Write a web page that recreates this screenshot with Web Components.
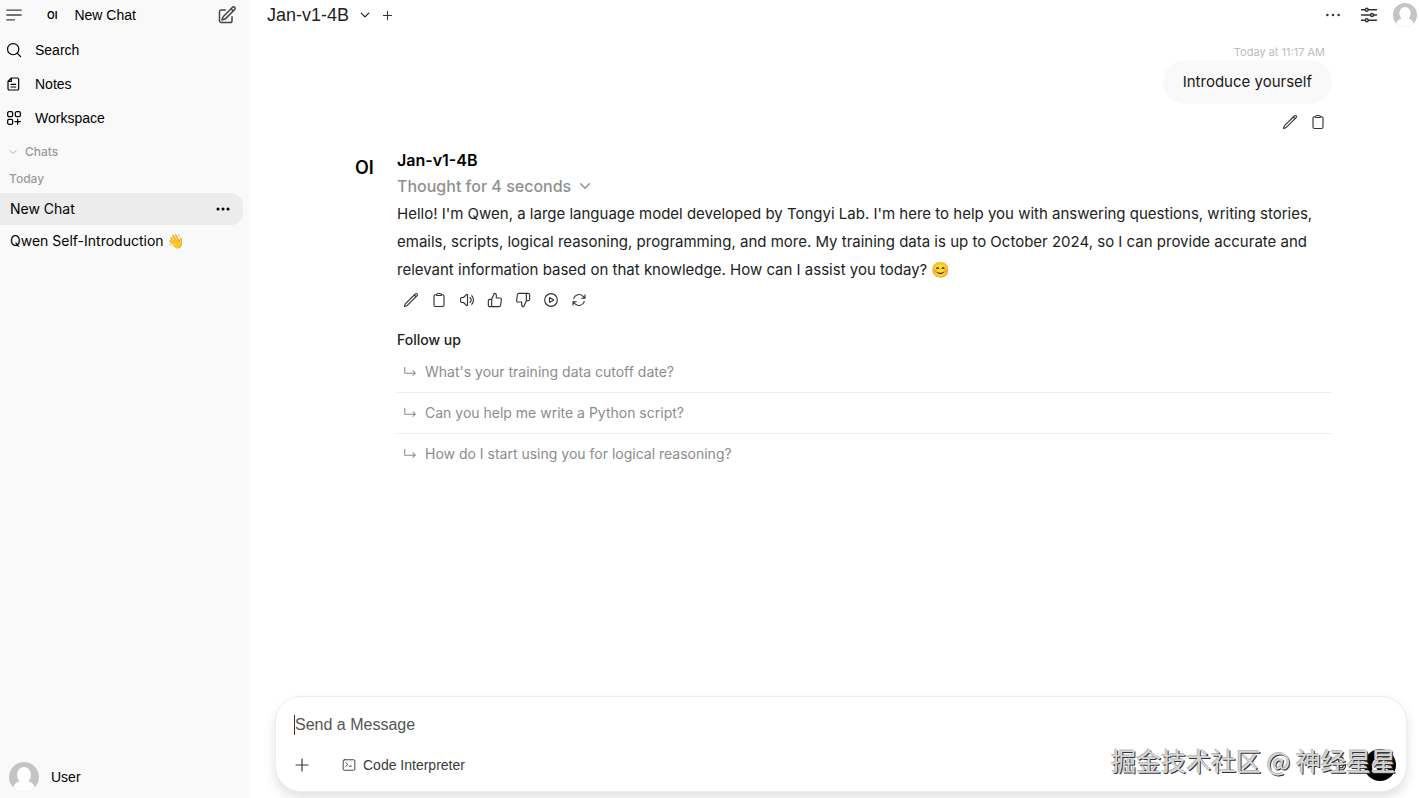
<!DOCTYPE html>
<html lang="en">
<head>
<meta charset="utf-8">
<meta name="viewport" content="width=device-width, initial-scale=1">
<title>New Chat • Open WebUI</title>
<style>
  html, body { margin: 0; height: 100%; }
  body { background: #fff; color: #111; font-family: Inter, "Liberation Sans", sans-serif; font-size: 14px; line-height: 20px; }
</style>
</head>
<body>
<chat-app>
  <side-bar slot="sidebar">
    <nav-item icon="search">Search</nav-item>
    <nav-item icon="note">Notes</nav-item>
    <nav-item icon="squares">Workspace</nav-item>
    <chat-link slot="chats" active>New Chat</chat-link>
    <chat-link slot="chats">Qwen Self-Introduction 👋</chat-link>
  </side-bar>
  <top-bar slot="header">Jan-v1-4B</top-bar>
  <user-message time="Today at 11:17 AM">Introduce yourself</user-message>
  <bot-message name="Jan-v1-4B" thought="Thought for 4 seconds">Hello! I'm Qwen, a large language model developed by Tongyi Lab. I'm here to help you with answering questions, writing stories, emails, scripts, logical reasoning, programming, and more. My training data is up to October 2024, so I can provide accurate and relevant information based on that knowledge. How can I assist you today? 😊
    <follow-up slot="follow">What's your training data cutoff date?</follow-up>
    <follow-up slot="follow">Can you help me write a Python script?</follow-up>
    <follow-up slot="follow">How do I start using you for logical reasoning?</follow-up>
  </bot-message>
  <message-composer slot="composer"></message-composer>
  <water-mark slot="overlay">掘金技术社区 @ 神经星星</water-mark>
</chat-app>

<script>
const ICONS = {
  menu: '<path d="M2.500 5.500h19M2.500 12h19M2.500 18.500h10"/>',
  compose: '<path d="m16.862 4.487 1.687-1.688a1.875 1.875 0 1 1 2.652 2.652L10.582 16.07a4.5 4.5 0 0 1-1.897 1.13L6 18l.8-2.685a4.5 4.5 0 0 1 1.13-1.897l8.932-8.931Zm0 0L19.5 7.125M18 14v4.75A2.25 2.25 0 0 1 15.75 21H5.25A2.25 2.25 0 0 1 3 18.75V8.25A2.25 2.25 0 0 1 5.25 6H10"/>',
  search: '<path d="M22 22l-5.300-5.300m0 0A8.400 8.400 0 1 0 4.800 4.800a8.400 8.400 0 0 0 11.900 11.900z"/>',
  note: '<path d="M8 3h9a2 2 0 0 1 2 2v14a2 2 0 0 1-2 2H5a2 2 0 0 1-2-2V8zM8 3v5H3M7.500 12.500h7M7.500 16.500h7"/>',
  squares: '<path d="M13.5 17.5h8M17.500 13.500v8"/><rect x="2.500" y="2.500" width="7.500" height="7.500" rx="2"/><rect x="2.500" y="14" width="7.500" height="7.500" rx="2"/><rect x="14" y="2.500" width="7.500" height="7.500" rx="2"/>',
  down: '<path d="m19.500 8.250-7.500 7.500-7.500-7.500"/>',
  plus: '<path d="M12 3v18M3 12h18"/>',
  dots: '<path d="M4.500 12h.01M12 12h.01M19.500 12h.01" stroke-width="3.400"/>',
  more: '<path d="M4.500 12h.01M12 12h.01M19.500 12h.01" stroke-width="4.600"/>',
  sliders: '<path d="M2 5h5m4 0h11M2 12h12m4 0h4M2 19h5m4 0h11"/><circle cx="9" cy="5" r="2"/><circle cx="16" cy="12" r="2"/><circle cx="9" cy="19" r="2"/>',
  pencil: '<path d="m16.862 4.487 1.687-1.688a1.875 1.875 0 1 1 2.652 2.652L6.832 19.820a4.500 4.500 0 0 1-1.897 1.130l-2.685.8.8-2.685a4.500 4.500 0 0 1 1.130-1.897L16.863 4.487ZM16.862 4.487 19.500 7.125"/>',
  clipboard: '<path d="M15.666 3.888A2.25 2.25 0 0 0 13.5 2.25h-3c-1.030 0-1.900.693-2.166 1.638m7.332 0c.055.194.084.4.084.612a.75.75 0 0 1-.75.75H9a.75.75 0 0 1-.75-.75c0-.212.03-.418.084-.612m7.332 0c.646.049 1.288.11 1.927.184 1.100.128 1.907 1.077 1.907 2.185V19.500a2.25 2.25 0 0 1-2.25 2.25H6.750A2.25 2.25 0 0 1 4.500 19.500V6.257c0-1.108.806-2.057 1.907-2.185a48.208 48.208 0 0 1 1.927-.184"/>',
  speaker: '<path d="M19.114 5.636a9 9 0 0 1 0 12.728M16.463 8.288a5.25 5.25 0 0 1 0 7.424M6.75 8.25l4.72-4.72a.75.75 0 0 1 1.28.53v15.88a.75.75 0 0 1-1.28.53l-4.72-4.72H4.51c-.88 0-1.704-.507-1.938-1.354A9.01 9.01 0 0 1 2.25 12c0-.83.112-1.633.322-2.396C2.806 8.756 3.63 8.25 4.51 8.25H6.75z"/>',
  up: '<path d="M14 9V5a3 3 0 0 0-3-3l-4 9v11h11.28a2 2 0 0 0 2-1.7l1.38-9a2 2 0 0 0-2-2.3zM7 22H4a2 2 0 0 1-2-2v-7a2 2 0 0 1 2-2h3"/>',
  dislike: '<path d="M10 15v4a3 3 0 0 0 3 3l4-9V2H5.72a2 2 0 0 0-2 1.7l-1.38 9a2 2 0 0 0 2 2.3zm7-13h2.67A2.31 2.31 0 0 1 22 4v7a2.31 2.31 0 0 1-2.33 2H17"/>',
  play: '<circle cx="12" cy="12" r="9.500"/><path d="M15.91 11.672a.375.375 0 0 1 0 .656l-5.603 3.113a.375.375 0 0 1-.557-.328V8.887c0-.286.307-.466.557-.327l5.603 3.112z"/>',
  refresh: '<path d="M16.023 9.348h4.992v-.001M2.985 19.644v-4.992m0 0h4.992m-4.993 0l3.181 3.183a8.25 8.25 0 0 0 13.803-3.7M4.031 9.865a8.25 8.25 0 0 1 13.803-3.7l3.181 3.182m0-4.991v4.99"/>',
  reply: '<path d="M3 4v10h18M17 10l4 4-4 4"/>',
  terminal: '<rect x="2" y="3" width="20" height="18" rx="2"/><path d="m6.500 8 3.500 3-3.500 3M12 14h4"/>',
  mic: '<path d="M12 18.750a6 6 0 0 0 6-6v-1.500m-6 7.500a6 6 0 0 1-6-6v-1.500m6 7.500v3.750m-3.750 0h7.500M12 15.750a3 3 0 0 1-3-3V4.500a3 3 0 1 1 6 0v8.250a3 3 0 0 1-3 3Z"/>',
  headphones: '<path d="M3 14v-2a9 9 0 0 1 18 0v2"/><rect x="3" y="13" width="4" height="8" rx="1" fill="currentColor"/><rect x="17" y="13" width="4" height="8" rx="1" fill="currentColor"/>'
};

const BASE = `
  *, *::before { box-sizing: border-box; }
  button { font: inherit; color: inherit; background: none; border: 0; padding: 0; margin: 0; cursor: pointer; display: flex; align-items: center; justify-content: center; }
  a { color: inherit; text-decoration: none; }
`;
function define(name, css, html) {
  customElements.define(name, class extends HTMLElement {
    constructor() {
      super();
      this.attachShadow({ mode: 'open' });
    }
    connectedCallback() {
      this.shadowRoot.innerHTML = `<style>${BASE}${css}</style>` + (typeof html === 'function' ? html(this) : html);
    }
  });
}

define('ui-icon', `
  :host { display: block; flex: none; width: var(--size, 16px); height: var(--size, 16px); }
  svg { display: block; width: 100%; height: 100%; }
`, el => `<svg viewBox="0 0 24 24" fill="none" stroke="currentColor" stroke-width="${el.getAttribute('weight') || 1.8}" stroke-linecap="round" stroke-linejoin="round" aria-hidden="true">${ICONS[el.getAttribute('name')]}</svg>`);

define('user-avatar', `
  :host { display: block; flex: none; width: var(--size, 24px); height: var(--size, 24px); border-radius: 50%; overflow: hidden; }
  svg { display: block; width: 100%; height: 100%; }
`, `<svg viewBox="0 0 30 30" role="img" aria-label="User avatar"><rect width="30" height="30" fill="#c4c4c4"/><ellipse cx="15" cy="13" rx="7" ry="8" fill="#fff"/><path d="M11 17h8v2c4 1 7 4 8 11H3c1-7 4-10 8-11z" fill="#fff"/></svg>`);

define('nav-item', `
  :host { display: block; }
  a { display: flex; align-items: center; gap: 13px; height: 34px; padding-left: 6px; }
`, el => `<a href="#"><ui-icon name="${el.getAttribute('icon')}"></ui-icon><slot></slot></a>`);

define('chat-link', `
  :host { display: block; font-family: Inter, "Noto Color Emoji", sans-serif; }
  .row { display: flex; align-items: center; height: 32px; padding: 0 12px 0 10px; border-radius: 0 12px 12px 0; }
  :host([active]) .row { background: #ececec; }
  a { flex: 1; white-space: nowrap; }
`, el => `<div class="row"><a href="#"><slot></slot></a>${el.hasAttribute('active') ? '<button aria-label="Chat options"><ui-icon name="more"></ui-icon></button>' : ''}</div>`);

define('side-bar', `
  :host { display: flex; flex-direction: column; background: #f9f9f9; color: #000; font-family: "Liberation Sans", Arial, sans-serif; font-size: 14px; line-height: 20px; }
  header { display: flex; align-items: center; height: 30px; padding: 0 13px 0 5px; color: #444; }
  .home { display: flex; align-items: center; flex: 1; gap: 17px; padding-left: 24px; color: #000; }
  .logo { font: 600 10px/20px Inter, sans-serif; }
  .compose { --size: 20px; }
  .menu { --size: 18px; }
  nav { padding-top: 3px; }
  .label { display: flex; align-items: center; justify-content: flex-start; gap: 7px; font: 500 12px/20px Inter, sans-serif; color: #999; margin: 0; }
  .chats { --size: 10px; padding: 7px 8px 0; }
  .today { padding: 7px 9px 4px; }
  .list { padding-right: 7px; }
  footer { margin-top: auto; display: flex; align-items: center; gap: 12px; height: 42px; padding-left: 9px; --size: 30px; }
`, `
  <header>
    <button class="menu" aria-label="Toggle sidebar"><ui-icon name="menu"></ui-icon></button>
    <a class="home" href="#"><span class="logo">OI</span><span>New Chat</span></a>
    <button class="compose" aria-label="New chat"><ui-icon name="compose"></ui-icon></button>
  </header>
  <nav><slot></slot></nav>
  <button class="label chats"><ui-icon name="down"></ui-icon>Chats</button>
  <h2 class="label today">Today</h2>
  <div class="list"><slot name="chats"></slot></div>
  <footer><user-avatar></user-avatar><span>User</span></footer>
`);

define('top-bar', `
  :host { display: flex; align-items: center; height: 30px; padding: 0 2px 0 17px; color: #333; }
  .model { font: 18px/24px "Liberation Sans", Arial, sans-serif; color: #222; gap: 10px; --size: 12px; }
  .add { --size: 11px; padding-left: 11px; }
  .actions { margin-left: auto; display: flex; align-items: center; gap: 15px; --size: 18px; }
  .more { --size: 18px; padding-right: 3px; }
  .me { --size: 24px; }
`, `
  <button class="model"><slot></slot><ui-icon name="down" weight="2.500"></ui-icon></button>
  <button class="add" aria-label="Add model"><ui-icon name="plus" weight="2.200"></ui-icon></button>
  <div class="actions">
    <button class="more" aria-label="More"><ui-icon name="dots"></ui-icon></button>
    <button aria-label="Controls"><ui-icon name="sliders"></ui-icon></button>
    <button class="me" aria-label="Account"><user-avatar></user-avatar></button>
  </div>
`);

define('tool-row', `
  :host { display: flex; color: #333; }
  button { padding: 6px; }
`, el => el.getAttribute('tools').split(' ').map(t => `<button aria-label="${t}"><ui-icon name="${t}" weight="1.700"></ui-icon></button>`).join(''));

define('user-message', `
  :host { display: flex; flex-direction: column; align-items: flex-end; }
  time { font-size: 11px; line-height: 16px; color: #bdbdbd; padding-right: 7px; }
  p { margin: 0; padding: 8px 20px; font-size: 15px; line-height: 28px; background: #f9f9f9; border-radius: 22px; margin-bottom: 4px; color: #1a1a1a; }
`, el => `<time>${el.getAttribute('time')}</time><p><slot></slot></p><tool-row tools="pencil clipboard"></tool-row>`);

define('follow-up', `
  :host { display: block; border-bottom: 1px solid #ececec; }
  :host(:last-child) { border-bottom: 0; }
  button { width: 100%; height: 40px; padding-left: 6px; gap: 8px; justify-content: flex-start; color: #8c8c8c; --size: 14px; }
`, `<button><ui-icon name="reply"></ui-icon><span><slot></slot></span></button>`);

define('bot-message', `
  :host { display: grid; grid-template-columns: 46px minmax(0, 1fr); padding: 10px 0 0 14px; }
  .logo { font-weight: 600; font-size: 18px; line-height: 24px; color: #000; padding: 10px 0 0 4px; }
  h2 { margin: 0; font-size: 16px; line-height: 28px; font-weight: 600; color: #000; }
  .thought { font-size: 16px; line-height: 24px; font-weight: 500; color: #909090; gap: 7px; --size: 14px; }
  p { margin: 2px 0; font-size: 15px; line-height: 28px; color: #222; }
  h3 { margin: 16px 0 2px; font-size: 14px; line-height: 20px; font-weight: 500; color: #222; }
`, el => `
  <div class="logo">OI</div>
  <div>
    <h2>${el.getAttribute('name')}</h2>
    <button class="thought">${el.getAttribute('thought')}<ui-icon name="down" weight="2.500"></ui-icon></button>
    <p><slot></slot></p>
    <tool-row tools="pencil clipboard speaker up dislike play refresh"></tool-row>
    <h3>Follow up</h3>
    <slot name="follow"></slot>
  </div>
`);

define('message-composer', `
  :host { display: block; padding: 0 12px 6px 25px; }
  form { border: 1px solid #eee; border-radius: 26px; background: #fff; box-shadow: 0 6px 12px rgba(0,0,0,.12); padding: 18px 10px 10px 18px; color: #3a3a3a; font-family: "Liberation Sans", Arial, sans-serif; }
  textarea { display: block; width: 100%; height: 20px; padding: 0; margin: 0; border: 0; border-left: 1px solid #333; outline: 0; resize: none; overflow: hidden; background: none; font: 16px/20px "Liberation Sans", Arial, sans-serif; color: #222; }
  textarea::placeholder { color: #555; opacity: 1; }
  .bar { display: flex; align-items: center; height: 32px; margin-top: 14px; }
  .code { gap: 7px; margin-left: 32px; --size: 14px; }
  .attach { --size: 16px; }
  .mic { margin-left: auto; margin-right: 14px; --size: 18px; }
  .call { width: 32px; height: 32px; border-radius: 50%; background: #000; color: #fff; --size: 18px; }
`, `
  <form>
    <textarea aria-label="Message" placeholder="Send a Message"></textarea>
    <div class="bar">
      <button type="button" class="attach" aria-label="Attach"><ui-icon name="plus"></ui-icon></button>
      <button type="button" class="code"><ui-icon name="terminal" weight="1.600"></ui-icon>Code Interpreter</button>
      <button type="button" class="mic" aria-label="Dictate"><ui-icon name="mic"></ui-icon></button>
      <button type="button" class="call" aria-label="Voice call"><ui-icon name="headphones" weight="2.500"></ui-icon></button>
    </div>
  </form>
`);

define('water-mark', `
  :host { position: absolute; right: 23px; bottom: 20px; pointer-events: none; white-space: nowrap; font: 25px/36px "Noto Sans CJK SC", sans-serif; color: #d6d6d6; text-shadow: 1px 1px 0 #333, -1px -1px 0 #bbb; }
`, `<slot></slot>`);

define('chat-app', `
  :host { position: relative; display: grid; grid-template-columns: 250px minmax(0, 1fr); min-height: 100vh; overflow: hidden; }
  main { display: flex; flex-direction: column; }
  .thread { flex: 1; width: 100%; max-width: 995px; margin: 0 auto; padding-top: 14px; }
`, `
  <slot name="sidebar"></slot>
  <main>
    <slot name="header"></slot>
    <section class="thread"><slot></slot></section>
    <slot name="composer"></slot>
  </main>
  <slot name="overlay"></slot>
`);
</script>
</body>
</html>
